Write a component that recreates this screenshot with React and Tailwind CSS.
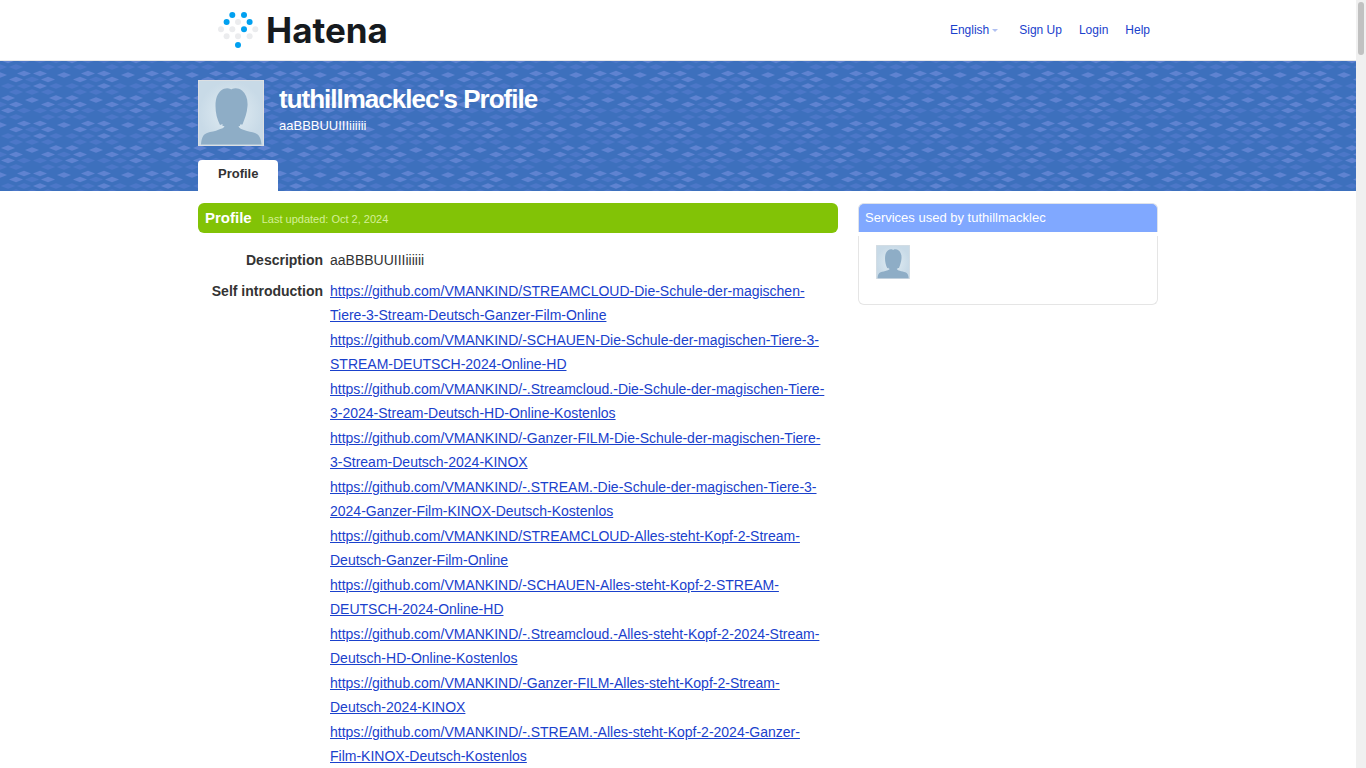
import React from 'react';

const repo = 'https://github.com/VMANKIND/';

const links = [
  'STREAMCLOUD-Die-Schule-der-magischen-Tiere-3-Stream-Deutsch-Ganzer-Film-Online',
  '-SCHAUEN-Die-Schule-der-magischen-Tiere-3-STREAM-DEUTSCH-2024-Online-HD',
  '-.Streamcloud.-Die-Schule-der-magischen-Tiere-3-2024-Stream-Deutsch-HD-Online-Kostenlos',
  '-Ganzer-FILM-Die-Schule-der-magischen-Tiere-3-Stream-Deutsch-2024-KINOX',
  '-.STREAM.-Die-Schule-der-magischen-Tiere-3-2024-Ganzer-Film-KINOX-Deutsch-Kostenlos',
  'STREAMCLOUD-Alles-steht-Kopf-2-Stream-Deutsch-Ganzer-Film-Online',
  '-SCHAUEN-Alles-steht-Kopf-2-STREAM-DEUTSCH-2024-Online-HD',
  '-.Streamcloud.-Alles-steht-Kopf-2-2024-Stream-Deutsch-HD-Online-Kostenlos',
  '-Ganzer-FILM-Alles-steht-Kopf-2-Stream-Deutsch-2024-KINOX',
  '-.STREAM.-Alles-steht-Kopf-2-2024-Ganzer-Film-KINOX-Deutsch-Kostenlos',
];

// [x, y, bright] inside one 64x50 tile, edge shapes repeated so they wrap
const diamonds = [
  [8, -0.5, 1], [24, -0.5, 0], [40, -0.5, 0], [56, -0.5, 0],
  [0, 6, 0], [16, 6, 0], [48, 6, 0], [64, 6, 0],
  [24, 12.5, 1], [40, 12.5, 1], [0, 14, 1], [64, 14, 1],
  [16, 18.5, 1], [32, 18.5, 0], [48, 18.5, 1],
  [8, 25, 0], [24, 25, 0], [40, 25, 1], [56, 25, 0],
  [16, 31, 0], [32, 31, 0], [48, 31, 0],
  [8, 37, 1], [56, 37, 1], [32, 39, 1],
  [16, 43.5, 1], [48, 43.5, 1], [0, 43.5, 0], [64, 43.5, 0],
  [8, 49.5, 1], [24, 49.5, 0], [40, 49.5, 0], [56, 49.5, 0],
];

function Diamonds() {
  return (
    <svg className="absolute inset-0 w-full h-full" aria-hidden="true">
      <defs>
        <pattern id="diamonds" width="64" height="50" patternUnits="userSpaceOnUse">
          {diamonds.map(([x, y, bright], i) => (
            <path key={i} d={`M${x - 7} ${y}l7 -2.7 7 2.7 -7 2.7z`} fill={bright ? '#5f83d1' : '#4c77c8'} />
          ))}
        </pattern>
      </defs>
      <rect width="100%" height="100%" fill="url(#diamonds)" />
    </svg>
  );
}

function Avatar({ className }) {
  return (
    <svg viewBox="0 0 66 66" className={className} role="img" aria-label="tuthillmacklec">
      <defs>
        <radialGradient id="glow">
          <stop offset="0" stopColor="#e2edf3" />
          <stop offset="1" stopColor="#c8dae7" />
        </radialGradient>
      </defs>
      <rect width="66" height="66" fill="#dcdfe2" />
      <rect x="1" y="1" width="64" height="64" fill="url(#glow)" />
      <path
        d="M34 9C37 7.5 41 8 44 10.5C48 14 50 19 49.5 26C49 33 47 38 44.5 44.5L42 44.5L42 46L40.5 46C41 48.5 43 49 46 50C50 51.5 54 52 57 53C61 54.5 63 58 63.5 64.5H3C3.5 58 5 54.5 9 53C13 51.5 17 51.5 21 49.5C24 48.5 26 48 26.5 46L24.5 46L24.5 44L22 45C19 39 17.5 33 17.5 26C17.5 18 19.5 14 23 10.5C26 8 30 7.5 32.5 9L33.2 9.5Z"
        fill="#8eadc6"
      />
    </svg>
  );
}

function Logo() {
  const blue = [[18.3, 7], [30, 7], [12.6, 14], [35.6, 14], [30, 21.3], [24, 37]];
  const gray = [[24, 14], [7, 21.3], [18.3, 21.3], [41.3, 21.3], [12.6, 28.3], [24, 28.3], [35.6, 28.3]];
  return (
    <a href="#" className="flex items-center gap-1 text-[#161a1e]">
      <svg width="48" height="44" aria-hidden="true">
        {gray.map(([x, y]) => <circle key={`${x}-${y}`} cx={x} cy={y} r="3" fill="#ebecee" />)}
        {blue.map(([x, y]) => <circle key={`${x}-${y}`} cx={x} cy={y} r="3" fill="#00a0f0" />)}
      </svg>
      <span className="font-[Inter,sans-serif] font-bold text-[35px] leading-[44px]">Hatena</span>
    </a>
  );
}

export default function App() {
  return (
    <div className="flex h-screen overflow-hidden bg-white text-[#333] font-['Liberation_Sans',sans-serif]">
      <div className="flex-1 min-w-0 overflow-hidden">
        <header className="border-b border-[#e8e8e8]">
          <div className="max-w-[960px] mx-auto flex justify-between pl-4 pr-2 py-2">
            <Logo />
            <nav className="flex gap-[17px] pt-3 text-xs leading-5 text-[#1a41cc]">
              <button type="button" className="flex items-center gap-[3px] h-5 mr-1">
                English
                <svg width="6" height="3" aria-hidden="true"><path d="M0 0h6L3 3z" fill="#b0c0f2" /></svg>
              </button>
              <a href="#">Sign Up</a>
              <a href="#">Login</a>
              <a href="#">Help</a>
            </nav>
          </div>
        </header>

        <section className="relative bg-[#3d70bd]">
          <Diamonds />
          <div className="relative max-w-[960px] mx-auto pt-[19px]">
            <div className="flex gap-[15px]">
              <Avatar className="size-[66px]" />
              <div className="text-white pt-1">
                <h1 className="text-[26px] leading-[30px] font-bold tracking-[-1px]">tuthillmacklec's Profile</h1>
                <p className="text-[13px] leading-5 pt-[2px]">aaBBBUUIIIiiiiii</p>
              </div>
            </div>
            <div className="flex pt-[14px]">
              <a href="#" className="h-[31px] px-5 bg-white rounded-t text-[13px] leading-7 font-bold">Profile</a>
            </div>
          </div>
        </section>

        <main className="max-w-[960px] mx-auto flex gap-5 pt-3 items-start">
          <section className="flex-1 min-w-0">
            <div className="flex items-baseline gap-[10px] h-[30px] px-[7px] bg-[#82c306] rounded-md text-white">
              <h2 className="text-[15px] leading-[30px] font-bold">Profile</h2>
              <span className="text-[11px] text-[#d5f097]">Last updated: Oct 2, 2024</span>
            </div>
            <table className="w-full mt-[15px] text-sm leading-6">
              <tbody>
                <tr className="align-top">
                  <th className="w-[132px] pr-[7px] pb-[7px] text-right whitespace-nowrap">Description</th>
                  <td>aaBBBUUIIIiiiiii</td>
                </tr>
                <tr className="align-top">
                  <th className="pr-[7px] text-right whitespace-nowrap">Self introduction</th>
                  <td className="pr-[10px]">
                    {links.map((link) => (
                      <a key={link} href={repo + link} className="block mb-px underline text-[#1a41cc]">{repo + link}</a>
                    ))}
                  </td>
                </tr>
              </tbody>
            </table>
          </section>

          <aside className="w-[300px]">
            <h2 className="h-[29px] px-[6px] bg-[#80a8ff] border border-b-0 border-[#dfe3ea] rounded-t-md text-white text-[13px] leading-7">
              Services used by tuthillmacklec
            </h2>
            <div className="mt-1 pt-[9px] pb-[25px] px-[17px] border border-t-0 border-[#e5e5e5] rounded-b-md">
              <a href="#" className="block w-fit"><Avatar className="size-[34px]" /></a>
            </div>
          </aside>
        </main>
      </div>

      <div className="w-[10px] bg-[#f0f0f0] px-[2px] pt-[2px]">
        <div className="h-[53px] bg-[#c1c1c1] rounded-full" />
      </div>
    </div>
  );
}
